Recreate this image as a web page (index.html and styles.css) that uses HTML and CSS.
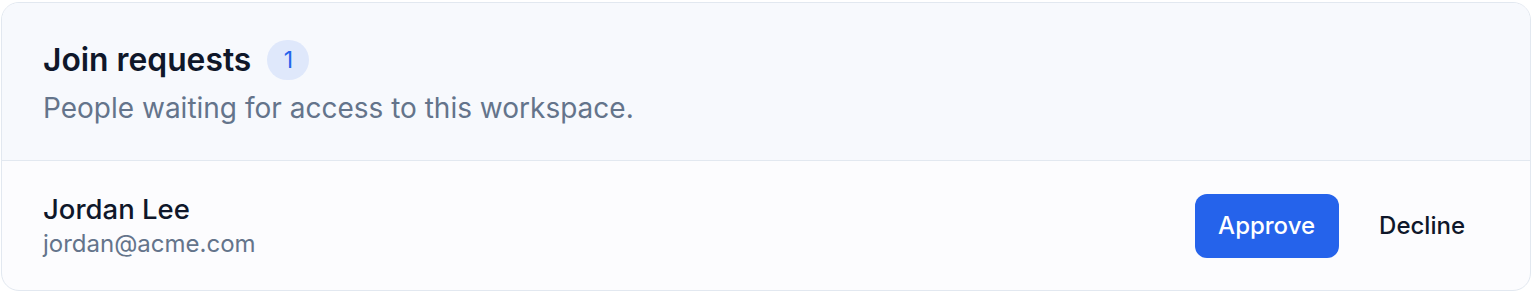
FILE: index.html
```html
<!DOCTYPE html>
<html lang="en">
<head>
    <meta charset="UTF-8">
    <meta name="viewport" content="width=device-width, initial-scale=1.0">
    <title>Join requests</title>
    <link rel="stylesheet" href="styles.css">
</head>
<body>
    <section class="card">
        <header class="card-head">
            <div class="title-row">
                <h1>Join requests</h1>
                <span class="badge">1</span>
            </div>
            <p class="subtitle">People waiting for access to this workspace.</p>
        </header>

        <div class="request">
            <div class="person">
                <div class="name">Jordan Lee</div>
                <div class="email">jordan@acme.com</div>
            </div>
            <div class="actions">
                <button class="btn btn-primary">Approve</button>
                <button class="btn btn-ghost">Decline</button>
            </div>
        </div>
    </section>
</body>
</html>
```

FILE: styles.css
```css
* { margin: 0; padding: 0; box-sizing: border-box; }
body {
    padding: 2px 1px 1px 1px;
    font-family: Inter, "Noto Sans", sans-serif;
    background: #ffffff;
}
.card {
    border: 1px solid #e2e8f0;
    border-radius: 18px;
    overflow: hidden;
    background: #fcfcfe;
}
.card-head {
    background: #f7f9fd;
    border-bottom: 1px solid #e2e8f0;
    padding: 37px 41px 35px;
    display: flex;
    flex-direction: column;
    gap: 11px;
}
.title-row {
    display: flex;
    align-items: center;
    gap: 16px;
}
h1 {
    font-size: 31.8px;
    font-weight: 600;
    color: #0f172a;
    line-height: 40px;
}
.badge {
    min-width: 42px;
    height: 40px;
    border-radius: 999px;
    background: #dfe8fb;
    color: #2563eb;
    font-size: 23px;
    display: flex;
    align-items: center;
    justify-content: center;
}
.subtitle {
    font-size: 28px;
    color: #64748b;
    line-height: 34px;
}
.request {
    display: flex;
    align-items: center;
    justify-content: space-between;
    padding: 0 41px;
    height: 129px;
}
.name {
    font-size: 27.5px;
    font-weight: 500;
    color: #0f172a;
    line-height: 34px;
}
.email {
    font-size: 24px;
    color: #64748b;
    line-height: 30px;
    margin-top: 3px;
}
.actions {
    display: flex;
    align-items: center;
    gap: 16px;
}
.btn {
    font-family: inherit;
    font-size: 24px;
    font-weight: 500;
    height: 64px;
    padding: 0 24px;
    border: none;
    border-radius: 12px;
    cursor: pointer;
}
.btn-primary {
    background: #2563eb;
    color: #ffffff;
    padding: 0 24px 0 23px;
}
.btn-ghost {
    background: transparent;
    color: #0f172a;
}
```
